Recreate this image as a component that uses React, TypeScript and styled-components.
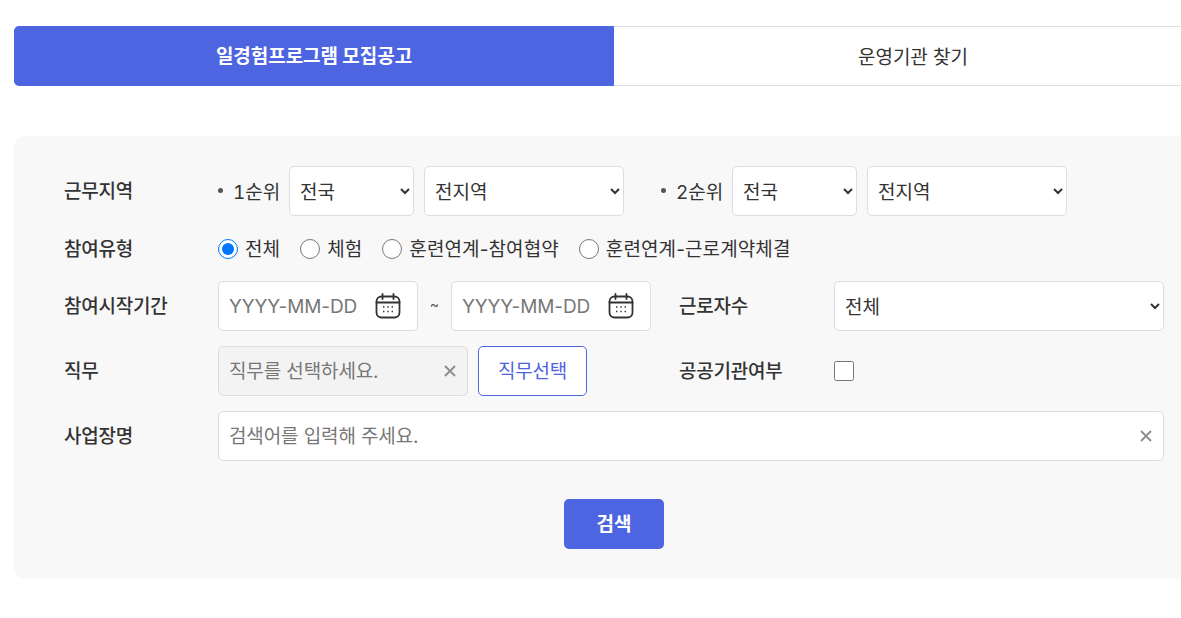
import React from 'react';
import styled, { createGlobalStyle } from 'styled-components';

const GlobalStyle = createGlobalStyle`
  html, body {
    margin: 0;
    padding: 0;
    background: #fff;
    overflow: hidden;
  }
  body, input, select, button {
    font-family: Inter, "Noto Sans CJK KR", sans-serif;
    font-size: 19px;
  }
`;

const Page = styled.div`
  width: 1200px;
  padding: 26px 0 0 14px;
  color: #333;
`;

const Tabs = styled.div`
  display: flex;
  height: 60px;
  margin-bottom: 50px;
`;

const Tab = styled.div<{ $active?: boolean }>`
  flex: 0 0 50%;
  display: flex;
  align-items: center;
  justify-content: center;
  box-sizing: border-box;
  padding-bottom: ${(p) => (p.$active ? 3 : 1)}px;
  padding-right: ${(p) => (p.$active ? 0 : 2)}px;
  font-weight: ${(p) => (p.$active ? 700 : 400)};
  letter-spacing: -0.05px;
  color: ${(p) => (p.$active ? '#fff' : '#333')};
  background: ${(p) => (p.$active ? '#4e65e2' : '#fff')};
  border-radius: ${(p) => (p.$active ? '5px 0 0 5px' : '0')};
  border-top: ${(p) => (p.$active ? 'none' : '1px solid #ddd')};
  border-bottom: ${(p) => (p.$active ? 'none' : '1px solid #ddd')};
`;

const Panel = styled.form`
  display: flex;
  flex-direction: column;
  gap: 15px;
  padding: 30px 50px;
  background: #f8f8f8;
  border-radius: 10px;
`;

const Row = styled.div<{ $split?: boolean; $height?: number }>`
  display: grid;
  grid-template-columns: ${(p) => (p.$split ? '154px 461px 155px 1fr' : '154px 1fr')};
  align-items: center;
  min-height: ${(p) => p.$height ?? 50}px;
`;

const Label = styled.label`
  font-weight: 500;
  color: #333;
  letter-spacing: -0.25px;
  padding-bottom: 3px;
`;

const Inline = styled.div<{ $gap?: number }>`
  display: flex;
  align-items: center;
  gap: ${(p) => p.$gap ?? 10}px;
`;

const Priority = styled.span<{ $offset?: number }>`
  display: flex;
  align-items: center;
  flex: none;
  width: 61px;
  margin-left: ${(p) => p.$offset ?? 0}px;
  padding-bottom: 1px;
  white-space: nowrap;
  font-variant-numeric: tabular-nums;
  &::before {
    content: '';
    flex: none;
    width: 5px;
    height: 5px;
    border-radius: 50%;
    background: #555;
    margin: 0 10px 0 0;
  }
`;

const Select = styled.select<{ $width: number }>`
  flex: none;
  width: ${(p) => p.$width}px;
  height: 50px;
  box-sizing: border-box;
  padding: 2px 0 0 6px;
  border: 1px solid #ddd;
  border-radius: 5px;
  background: #fff;
  color: #333;
`;

const RadioGroup = styled.div`
  display: flex;
  align-items: center;
  gap: 20px;
`;

const RadioLabel = styled.label`
  display: flex;
  align-items: center;
  gap: 7px;
  color: #333;
  letter-spacing: 0.1px;
`;

const RadioText = styled.span`
  padding-bottom: 3px;
`;

const Radio = styled.input.attrs({ type: 'radio', name: 'kind' })`
  width: 20px;
  height: 20px;
  margin: 0;
`;

const Check = styled.input.attrs({ type: 'checkbox' })`
  width: 20px;
  height: 20px;
  margin: 0;
`;

const InputBox = styled.div<{ $width?: number }>`
  position: relative;
  width: ${(p) => (p.$width ? `${p.$width}px` : '100%')};
`;

const TextInput = styled.input`
  display: block;
  width: 100%;
  height: 50px;
  box-sizing: border-box;
  padding: 0 10px;
  border: 1px solid #ddd;
  border-radius: 5px;
  background: #fff;
  color: #333;
  letter-spacing: -0.12px;
  &::placeholder {
    color: #777;
    opacity: 1;
  }
  &:read-only {
    background: #f3f3f3;
  }
`;

const IconSlot = styled.span<{ $right: number }>`
  position: absolute;
  top: 50%;
  right: ${(p) => p.$right}px;
  transform: translateY(-50%);
  display: flex;
`;

const Tilde = styled.span`
  width: 33px;
  padding-bottom: 6px;
  text-align: center;
  font-size: 14px;
  color: #555;
`;

const OutlineButton = styled.button`
  height: 50px;
  width: 109px;
  box-sizing: border-box;
  border: 1px solid #4e65e2;
  border-radius: 5px;
  background: #fff;
  color: #4e65e2;
  letter-spacing: -0.25px;
  padding: 0 0 3px;
`;

const Actions = styled.div`
  display: flex;
  justify-content: center;
  margin-top: 23px;
`;

const SearchButton = styled.button`
  width: 100px;
  height: 50px;
  border: none;
  border-radius: 5px;
  background: #4e65e2;
  color: #fff;
  font-weight: 700;
  padding: 0 0 3px;
`;

const CalendarIcon = () => (
  <svg width="26" height="26" viewBox="0 0 26 26" fill="none" stroke="#333" strokeWidth="1.8">
    <rect x="1.5" y="3.5" width="23" height="21" rx="5" />
    <path d="M1.5 9.5h23M7.5 1v5M18.5 1v5" strokeLinecap="round" />
    <path
      d="M8 14h1.4M12.3 14h1.4M16.6 14h1.4M8 18.5h1.4M12.3 18.5h1.4M16.6 18.5h1.4"
      strokeWidth="1.4"
    />
  </svg>
);

const ClearIcon = () => (
  <svg width="12" height="12" viewBox="0 0 12 12" fill="none" stroke="#8c8c8c" strokeWidth="1.8">
    <path d="M1 1l10 10M11 1L1 11" />
  </svg>
);

const DateField = () => (
  <InputBox $width={200}>
    <TextInput placeholder="YYYY-MM-DD" />
    <IconSlot $right={17}>
      <CalendarIcon />
    </IconSlot>
  </InputBox>
);

export default function App() {
  return (
    <Page>
      <GlobalStyle />
      <Tabs>
        <Tab $active>일경험프로그램 모집공고</Tab>
        <Tab>운영기관 찾기</Tab>
      </Tabs>
      <Panel>
        <Row>
          <Label>근무지역</Label>
          <Inline>
            <Priority>1순위</Priority>
            <Select $width={125}>
              <option>전국</option>
            </Select>
            <Select $width={200}>
              <option>전지역</option>
            </Select>
            <Priority $offset={27}>2순위</Priority>
            <Select $width={125}>
              <option>전국</option>
            </Select>
            <Select $width={200}>
              <option>전지역</option>
            </Select>
          </Inline>
        </Row>
        <Row $height={35}>
          <Label>참여유형</Label>
          <RadioGroup>
            <RadioLabel>
              <Radio defaultChecked />
              <RadioText>전체</RadioText>
            </RadioLabel>
            <RadioLabel>
              <Radio />
              <RadioText>체험</RadioText>
            </RadioLabel>
            <RadioLabel>
              <Radio />
              <RadioText>훈련연계-참여협약</RadioText>
            </RadioLabel>
            <RadioLabel>
              <Radio />
              <RadioText>훈련연계-근로계약체결</RadioText>
            </RadioLabel>
          </RadioGroup>
        </Row>
        <Row $split>
          <Label>참여시작기간</Label>
          <Inline $gap={0}>
            <DateField />
            <Tilde>~</Tilde>
            <DateField />
          </Inline>
          <Label>근로자수</Label>
          <Select $width={330}>
            <option>전체</option>
          </Select>
        </Row>
        <Row $split>
          <Label>직무</Label>
          <Inline>
            <InputBox $width={250}>
              <TextInput readOnly placeholder="직무를 선택하세요." />
              <IconSlot $right={12}>
                <ClearIcon />
              </IconSlot>
            </InputBox>
            <OutlineButton type="button">직무선택</OutlineButton>
          </Inline>
          <Label>공공기관여부</Label>
          <Check />
        </Row>
        <Row>
          <Label>사업장명</Label>
          <InputBox>
            <TextInput placeholder="검색어를 입력해 주세요." />
            <IconSlot $right={12}>
              <ClearIcon />
            </IconSlot>
          </InputBox>
        </Row>
        <Actions>
          <SearchButton type="button">검색</SearchButton>
        </Actions>
      </Panel>
    </Page>
  );
}
